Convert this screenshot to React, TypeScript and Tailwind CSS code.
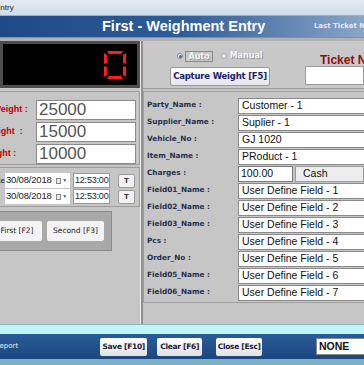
import React from 'react';

const fields: [string, string][] = [
  ['Party_Name :', 'Customer - 1'],
  ['Supplier_Name :', 'Suplier - 1'],
  ['Vehicle_No :', 'GJ 1020'],
  ['Item_Name :', 'PRoduct - 1'],
  ['Charges :', '100.00'],
  ['Field01_Name :', 'User Define Field - 1'],
  ['Field02_Name :', 'User Define Field - 2'],
  ['Field03_Name :', 'User Define Field - 3'],
  ['Pcs :', 'User Define Field - 4'],
  ['Order_No :', 'User Define Field - 5'],
  ['Field05_Name :', 'User Define Field - 6'],
  ['Field06_Name :', 'User Define Field - 7'],
];

const SevenSegZero = () => (
  <svg width="22" height="28" viewBox="0 0 22 28">
    <g fill="#ff1c1c">
      <polygon points="3,0 19,0 17,3 5,3" />
      <polygon points="0,2 3,4 3,12 0,13" />
      <polygon points="22,2 19,4 19,12 22,13" />
      <polygon points="0,15 3,16 3,24 0,26" />
      <polygon points="22,15 19,16 19,24 22,26" />
      <polygon points="5,25 17,25 19,28 3,28" />
    </g>
  </svg>
);

const WeightRow = ({ label, value }: { label: string; value: string }) => (
  <div className="flex items-center h-[21px]">
    <span className="w-[72px] -ml-[36px] whitespace-pre text-[9px] font-bold text-[#c40000]">{label}</span>
    <div className="w-[100px] h-[20px] bg-white border border-[#8a8a8a] flex items-center pl-[2px] text-[17px] leading-none text-[#555]">
      {value}
    </div>
  </div>
);

const DateRow = ({ label }: { label: string }) => (
  <div className="flex items-center h-[15px]">
    <span className="w-[5px] overflow-hidden flex justify-end text-[8px] text-[#222] whitespace-nowrap">{label}</span>
    <div className="w-[65px] h-[15px] bg-white flex items-center justify-between pl-[1px] pr-[3px] text-[9.5px] text-[#222] tracking-[-0.2px]">
      <span>30/08/2018</span>
      <span className="flex items-center gap-[1px]">
        <span className="w-[5px] h-[6px] border border-[#888] bg-[#eee]" />
        <span className="text-[5px] text-[#555]">▼</span>
      </span>
    </div>
    <div className="ml-[3px] w-[37px] h-[15px] bg-white border border-[#999] flex items-center pl-[1px] text-[9px] text-[#222] tracking-[-0.2px]">
      12:53:00
    </div>
    <div className="ml-[8px] w-[17px] h-[14px] bg-[#f2f2f2] border border-[#9a9a9a] rounded-[2px] flex items-center justify-center text-[8px] font-bold text-[#222]">
      T
    </div>
  </div>
);

const FooterButton = ({ text, className }: { text: string; className: string }) => (
  <div
    className={`h-[18px] bg-gradient-to-b from-white to-[#e2e2e2] rounded-[2px] flex items-center justify-center text-[7.5px] font-bold text-[#1a1a3a] font-['DejaVu_Sans',sans-serif] tracking-[-0.3px] ${className}`}
  >
    {text}
  </div>
);

export default function App() {
  return (
    <div className="w-[364px] h-[365px] overflow-hidden bg-[#c6c6c6] flex flex-col font-['Liberation_Sans',Arial,sans-serif]">
      {/* window title */}
      <div className="h-[16px] bg-gradient-to-b from-[#e4ebf4] to-[#cfdbe9] border-b border-[#9fb0c6] flex items-end pb-[1px]">
        <span className="-ml-[5px] text-[8px] text-[#222]">Entry</span>
      </div>
      {/* header */}
      <div className="h-[21px] bg-gradient-to-r from-[#1d4a86] via-[#2f5d98] to-[#8aa5c8] flex items-center">
        <span className="ml-[102px] text-[14.5px] font-bold text-white">
          First - Weighment Entry
        </span>
        <span className="ml-auto mr-[-6px] text-[7px] font-bold text-[#e4e9f2] font-['DejaVu_Sans',sans-serif] whitespace-nowrap">
          Last Ticket No
        </span>
      </div>
      <div className="h-[4px] bg-[#b2b2b2] border-t border-[#8e8e8e]" />

      {/* main */}
      <div className="h-[283px] flex">
        {/* left column */}
        <div className="w-[141px] flex flex-col border-r border-[#f0f0f0]">
          <div className="h-[47px] bg-black border-[3px] border-[#4d4d4d] flex items-center justify-end pr-[11px]">
            <SevenSegZero />
          </div>
          <div className="h-[3px]" />
          <div className="h-[74px] border border-[#9c9c9c] border-l-0 flex flex-col pt-[7px] gap-[1px]">
            <WeightRow label="Gross Weight :" value="25000" />
            <WeightRow label="Tare Weight  :" value="15000" />
            <WeightRow label="Net Weight :" value="10000" />
          </div>
          <div className="h-[2px]" />
          <div className="h-[40px] border border-[#9c9c9c] border-l-0 flex flex-col pt-[5px] gap-[1px]">
            <DateRow label="Date" />
            <DateRow label="" />
          </div>
          <div className="h-[4px]" />
          <div className="w-[112px] h-[40px] bg-[#a9a9a9] border border-[#8c8c8c] border-l-0 flex items-center gap-[5px]">
            <div className="w-[50px] -ml-[8px] h-[20px] bg-[#f3f3f3] rounded-[2px] flex items-center justify-center text-[7.5px] text-[#222] font-['DejaVu_Sans',sans-serif]">
              First [F2]
            </div>
            <div className="w-[57px] h-[20px] bg-[#f3f3f3] rounded-[2px] flex items-center justify-center text-[7.5px] text-[#222] font-['DejaVu_Sans',sans-serif]">
              Second [F3]
            </div>
          </div>
        </div>
        <div className="w-[2px] bg-[#8f8f8f]" />

        {/* right column */}
        <div className="flex-1 flex flex-col">
          <div className="h-[48px] bg-[#c8c8c8] border-b border-[#9a9a9a] flex items-start">
            <div className="flex flex-col items-center ml-[27px] w-[100px]">
              <div className="flex items-center mt-[10px] h-[10px] text-[8px] font-bold font-['DejaVu_Sans',sans-serif] text-[#f4f4f4] [text-shadow:1px_1px_0_#9a9a9a]">
                <span className="w-[6px] h-[6px] rounded-full bg-white border border-[#888] flex items-center justify-center">
                  <span className="w-[3px] h-[3px] rounded-full bg-[#2d6fc4]" />
                </span>
                <span className="ml-[2px] px-[2px] border border-[#8a8a8a] leading-[9px]">Auto</span>
                <span className="ml-[8px] w-[6px] h-[6px] rounded-full bg-[#e8e8e8] border border-[#aaa]" />
                <span className="ml-[3px]">Manual</span>
              </div>
              <div className="mt-[6px] w-[100px] h-[19px] bg-gradient-to-b from-white to-[#e6e6e6] border border-[#9a9a9a] rounded-[2px] flex items-center justify-center text-[8.5px] font-bold text-[#1c1c6e] font-['DejaVu_Sans',sans-serif] tracking-[-0.2px]">
                Capture Weight [F5]
              </div>
            </div>
            <div className="ml-auto flex flex-col items-start w-[59px]">
              <span className="mt-[10px] ml-[15px] h-[15px] text-[12px] font-bold text-[#8c1111] whitespace-nowrap">
                Ticket No
              </span>
              <div className="w-[59px] h-[19px] bg-white border border-[#9a9a9a]" />
            </div>
          </div>
          <div className="h-[2px]" />
          <div className="h-[212px] border border-[#a0a0a0] border-r-0 flex flex-col pt-[5px]">
            {fields.map(([label, value]) => (
              <div key={label} className="h-[17px] flex items-center">
                <span className="w-[94px] pl-[3px] text-[7.3px] font-bold text-[#27304d] font-['DejaVu_Sans',sans-serif] whitespace-nowrap">
                  {label}
                </span>
                {label === 'Charges :' ? (
                  <div className="flex-1 flex items-center gap-[2px]">
                    <div className="w-[55px] h-[16px] bg-white border border-[#7a7a7a] flex items-center pl-[2px] text-[10.5px] text-[#111]">
                      {value}
                    </div>
                    <div className="flex-1 h-[16px] bg-[#ededed] border border-[#9a9a9a] flex items-center pl-[7px] text-[10.5px] text-[#111]">
                      Cash
                    </div>
                  </div>
                ) : (
                  <div className="flex-1 h-[16px] bg-white border border-[#8a8a8a] border-r-0 flex items-center pl-[3px] text-[10.5px] text-[#111]">
                    {value}
                  </div>
                )}
              </div>
            ))}
          </div>
        </div>
      </div>

      {/* footer */}
      <div className="h-[10px] bg-[#bff6f8] border-t border-[#8fb7bf]" />
      <div className="h-[25px] bg-gradient-to-b from-[#2a5d98] to-[#1b4680] flex items-center">
        <span className="-ml-[5px] text-[7px] text-[#e8eef6] font-['DejaVu_Sans',sans-serif]">Report</span>
        <FooterButton text="Save [F10]" className="ml-[82px] w-[47px]" />
        <FooterButton text="Clear [F6]" className="ml-[10px] w-[45px]" />
        <FooterButton text="Close [Esc]" className="ml-[14px] w-[46px]" />
        <div className="ml-auto w-[48px] h-[17px] bg-white border border-[#8a8a8a] border-r-0 flex items-center pl-[2px] text-[10.5px] font-bold text-[#111]">
          NONE
        </div>
      </div>
      <div className="flex-1 bg-[#7ab0c4]" />
    </div>
  );
}
